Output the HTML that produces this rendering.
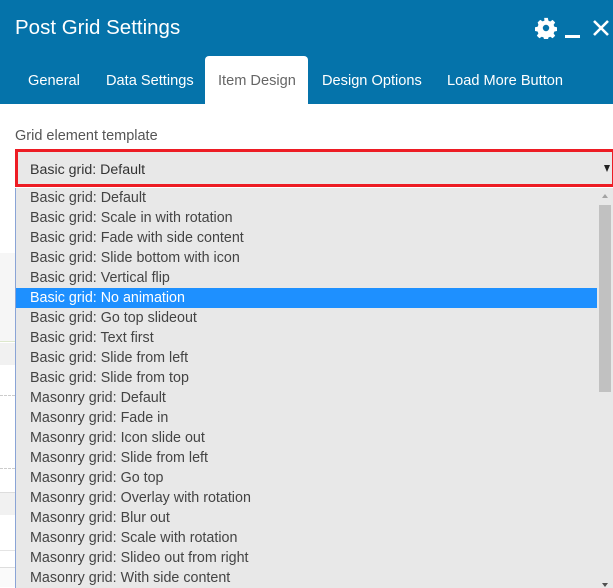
<!DOCTYPE html>
<html><head><meta charset="utf-8"><style>
*{margin:0;padding:0;box-sizing:border-box}
body{width:613px;height:587px;overflow:hidden;background:#fff;font-family:"Liberation Sans",sans-serif;position:relative}
.hdr{position:absolute;left:0;top:0;width:613px;height:104px;background:#0573aa}
.title{position:absolute;left:15px;top:16px;color:#fff;font-size:20.5px}
.tab{position:absolute;top:73px;color:#fff;font-size:14.6px}
.act{position:absolute;left:205px;top:56px;width:103px;height:48px;background:#fff;border-radius:4px 4px 0 0}
.lbl{position:absolute;left:15px;top:128px;font-size:14.5px;color:#555}
.sel{position:absolute;left:15px;top:149px;width:600px;height:38px;border:3px solid #ed1c24;background:#e8e8e8}
.sel span{position:absolute;left:12px;top:10px;font-size:14.2px;color:#333}
.list{position:absolute;left:15px;top:188px;width:598px;height:400px;background:#e8e8e8;border-left:1px solid #8aa4d6}
.row{height:20px;line-height:20px;padding-left:14px;font-size:14.3px;color:#444;width:582px;white-space:nowrap}
.hl{background:#1e90ff;color:#fff}
.sb{position:absolute;left:597px;top:188px;width:16px;height:400px;background:#e8e8e8}
.thumb{position:absolute;left:2px;top:17px;width:12px;height:187px;background:#c1c1c1}
</style></head><body>
<div style="position:absolute;left:0;top:253px;width:15px;height:89px;background:#f6f6f6;border-bottom:1px solid #dde8cc"></div>
<div style="position:absolute;left:0;top:343px;width:15px;height:22px;background:#f1f1f1"></div>
<div style="position:absolute;left:0;top:395px;width:15px;border-top:1px dashed #ccc"></div>
<div style="position:absolute;left:0;top:468px;width:15px;border-top:1px dashed #ccc"></div>
<div style="position:absolute;left:0;top:492px;width:15px;height:23px;background:#f1f1f1;border-top:1px solid #ddd"></div>
<div style="position:absolute;left:0;top:550px;width:15px;border-top:1px solid #e4e4e4"></div>
<div style="position:absolute;left:0;top:567px;width:15px;height:20px;border-top:1px solid #ddd;background:#fafafa"></div>
<div class="hdr">
<div class="title">Post Grid Settings</div>
<svg style="position:absolute;left:535px;top:17px" width="22" height="22" viewBox="0 0 24 24"><path fill="#fff" d="M10 1h4l.6 3 2 .9 2.6-1.7 2.8 2.8-1.7 2.6.9 2 3 .6v4l-3 .6-.9 2 1.7 2.6-2.8 2.8-2.6-1.7-2 .9-.6 3h-4l-.6-3-2-.9-2.6 1.7-2.8-2.8 1.7-2.6-.9-2-3-.6v-4l3-.6.9-2L2.9 5.9 5.7 3.1l2.6 1.7 2-.9zM12 8.5a3.5 3.5 0 1 0 0 7 3.5 3.5 0 0 0 0-7z"/></svg>
<div style="position:absolute;left:565px;top:35px;width:15px;height:3px;background:#fff"></div>
<svg style="position:absolute;left:592px;top:19px" width="18" height="18" viewBox="0 0 18 18"><path d="M2 2L16 16M16 2L2 16" stroke="#fff" stroke-width="2.6"/></svg>
<div class="act"></div>
<div class="tab" style="left:28px">General</div>
<div class="tab" style="left:106px">Data Settings</div>
<div class="tab" style="left:218px;color:#666">Item Design</div>
<div class="tab" style="left:322px">Design Options</div>
<div class="tab" style="left:447px">Load More Button</div>
</div>
<div class="lbl">Grid element template</div>
<div class="sel"><span>Basic grid: Default</span><div style="position:absolute;right:2px;top:13px;border-left:3px solid transparent;border-right:3px solid transparent;border-top:7px solid #222"></div></div>
<div class="list">
<div class="row">Basic grid: Default</div>
<div class="row">Basic grid: Scale in with rotation</div>
<div class="row">Basic grid: Fade with side content</div>
<div class="row">Basic grid: Slide bottom with icon</div>
<div class="row">Basic grid: Vertical flip</div>
<div class="row hl">Basic grid: No animation</div>
<div class="row">Basic grid: Go top slideout</div>
<div class="row">Basic grid: Text first</div>
<div class="row">Basic grid: Slide from left</div>
<div class="row">Basic grid: Slide from top</div>
<div class="row">Masonry grid: Default</div>
<div class="row">Masonry grid: Fade in</div>
<div class="row">Masonry grid: Icon slide out</div>
<div class="row">Masonry grid: Slide from left</div>
<div class="row">Masonry grid: Go top</div>
<div class="row">Masonry grid: Overlay with rotation</div>
<div class="row">Masonry grid: Blur out</div>
<div class="row">Masonry grid: Scale with rotation</div>
<div class="row">Masonry grid: Slideo out from right</div>
<div class="row">Masonry grid: With side content</div>
</div>
<div class="sb"><div style="position:absolute;left:5px;top:6px;border-left:3px solid transparent;border-right:3px solid transparent;border-bottom:4px solid #a3a3a3"></div><div class="thumb"></div><div style="position:absolute;left:5px;top:395px;border-left:3px solid transparent;border-right:3px solid transparent;border-top:4px solid #505050"></div></div>
</body></html>
